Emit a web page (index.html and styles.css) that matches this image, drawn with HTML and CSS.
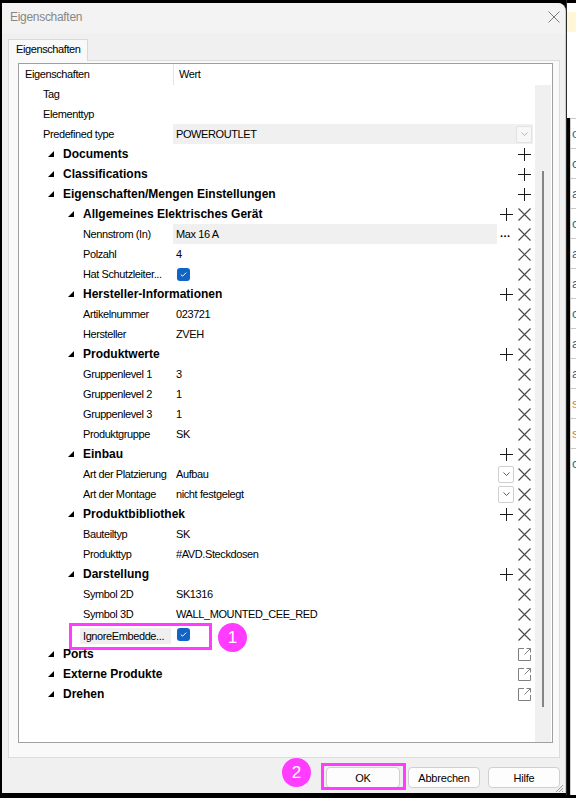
FILE: index.html
```html
<!DOCTYPE html>
<html lang="de">
<head>
<meta charset="utf-8">
<title>Eigenschaften</title>
<link rel="stylesheet" href="styles.css">
</head>
<body>
<div class="screen">
  <div class="dialog">
    <div class="titlebar">
      <span class="title">Eigenschaften</span>
      <svg class="close" width="12" height="12" viewBox="0 0 12 12"><path d="M0.5 0.5l11 11M11.5 0.5l-11 11" stroke="#7a7a7a" stroke-width="1" fill="none"/></svg>
    </div>
    <div class="content">
      <div class="tabs"><div class="tab">Eigenschaften</div></div>
      <div class="panel">
        <div class="listbox">
          <div class="head"><div class="hk">Eigenschaften</div><div class="hv">Wert</div></div>
          <div class="treebody">
            <div class="rows">
              <div class="row"><div class="k p0">Tag</div><div class="v"></div><div class="ic"></div><div class="ic"></div></div>
              <div class="row"><div class="k p0">Elementtyp</div><div class="v"></div><div class="ic"></div><div class="ic"></div></div>
              <div class="row"><div class="k p0">Predefined type</div><div class="v shade wide"><span>POWEROUTLET</span><span class="dd off"><svg width="7" height="4" viewBox="0 0 7 4"><path d="M0.5 0.5l3 3 3-3" stroke="#b4b4b4" fill="none"/></svg></span></div></div>

              <div class="row"><div class="k g0"><i class="tri"></i>Documents</div><div class="v"></div><div class="ic"></div><div class="ic"><svg class="plus" width="13" height="13" viewBox="0 0 13 13"><path d="M6.5 0v13M0 6.5h13"/></svg></div></div>
              <div class="row"><div class="k g0"><i class="tri"></i>Classifications</div><div class="v"></div><div class="ic"></div><div class="ic"><svg class="plus" width="13" height="13" viewBox="0 0 13 13"><path d="M6.5 0v13M0 6.5h13"/></svg></div></div>
              <div class="row"><div class="k g0"><i class="tri"></i>Eigenschaften/Mengen Einstellungen</div><div class="v"></div><div class="ic"></div><div class="ic"><svg class="plus" width="13" height="13" viewBox="0 0 13 13"><path d="M6.5 0v13M0 6.5h13"/></svg></div></div>

              <div class="row"><div class="k g1"><i class="tri"></i>Allgemeines Elektrisches Gerät</div><div class="v"></div><div class="ic"><svg class="plus" width="13" height="13" viewBox="0 0 13 13"><path d="M6.5 0v13M0 6.5h13"/></svg></div><div class="ic"><svg class="del" width="13" height="13" viewBox="0 0 13 13"><path d="M0.5 0.5l12 12M12.5 0.5l-12 12"/></svg></div></div>
              <div class="row"><div class="k p1">Nennstrom (In)</div><div class="v shade">Max 16 A</div><div class="ic dots">...</div><div class="ic"><svg class="del" width="13" height="13" viewBox="0 0 13 13"><path d="M0.5 0.5l12 12M12.5 0.5l-12 12"/></svg></div></div>
              <div class="row"><div class="k p1">Polzahl</div><div class="v">4</div><div class="ic"></div><div class="ic"><svg class="del" width="13" height="13" viewBox="0 0 13 13"><path d="M0.5 0.5l12 12M12.5 0.5l-12 12"/></svg></div></div>
              <div class="row"><div class="k p1">Hat Schutzleiter...</div><div class="v"><span class="check"><svg width="7" height="5" viewBox="0 0 7 5"><path d="M0.8 2.6l1.8 1.6 3.6-3.6" stroke="#fff" stroke-width="1" fill="none"/></svg></span></div><div class="ic"></div><div class="ic"><svg class="del" width="13" height="13" viewBox="0 0 13 13"><path d="M0.5 0.5l12 12M12.5 0.5l-12 12"/></svg></div></div>

              <div class="row"><div class="k g1"><i class="tri"></i>Hersteller-Informationen</div><div class="v"></div><div class="ic"><svg class="plus" width="13" height="13" viewBox="0 0 13 13"><path d="M6.5 0v13M0 6.5h13"/></svg></div><div class="ic"><svg class="del" width="13" height="13" viewBox="0 0 13 13"><path d="M0.5 0.5l12 12M12.5 0.5l-12 12"/></svg></div></div>
              <div class="row"><div class="k p1">Artikelnummer</div><div class="v">023721</div><div class="ic"></div><div class="ic"><svg class="del" width="13" height="13" viewBox="0 0 13 13"><path d="M0.5 0.5l12 12M12.5 0.5l-12 12"/></svg></div></div>
              <div class="row"><div class="k p1">Hersteller</div><div class="v">ZVEH</div><div class="ic"></div><div class="ic"><svg class="del" width="13" height="13" viewBox="0 0 13 13"><path d="M0.5 0.5l12 12M12.5 0.5l-12 12"/></svg></div></div>

              <div class="row"><div class="k g1"><i class="tri"></i>Produktwerte</div><div class="v"></div><div class="ic"><svg class="plus" width="13" height="13" viewBox="0 0 13 13"><path d="M6.5 0v13M0 6.5h13"/></svg></div><div class="ic"><svg class="del" width="13" height="13" viewBox="0 0 13 13"><path d="M0.5 0.5l12 12M12.5 0.5l-12 12"/></svg></div></div>
              <div class="row"><div class="k p1">Gruppenlevel 1</div><div class="v">3</div><div class="ic"></div><div class="ic"><svg class="del" width="13" height="13" viewBox="0 0 13 13"><path d="M0.5 0.5l12 12M12.5 0.5l-12 12"/></svg></div></div>
              <div class="row"><div class="k p1">Gruppenlevel 2</div><div class="v">1</div><div class="ic"></div><div class="ic"><svg class="del" width="13" height="13" viewBox="0 0 13 13"><path d="M0.5 0.5l12 12M12.5 0.5l-12 12"/></svg></div></div>
              <div class="row"><div class="k p1">Gruppenlevel 3</div><div class="v">1</div><div class="ic"></div><div class="ic"><svg class="del" width="13" height="13" viewBox="0 0 13 13"><path d="M0.5 0.5l12 12M12.5 0.5l-12 12"/></svg></div></div>
              <div class="row"><div class="k p1">Produktgruppe</div><div class="v">SK</div><div class="ic"></div><div class="ic"><svg class="del" width="13" height="13" viewBox="0 0 13 13"><path d="M0.5 0.5l12 12M12.5 0.5l-12 12"/></svg></div></div>

              <div class="row"><div class="k g1"><i class="tri"></i>Einbau</div><div class="v"></div><div class="ic"><svg class="plus" width="13" height="13" viewBox="0 0 13 13"><path d="M6.5 0v13M0 6.5h13"/></svg></div><div class="ic"><svg class="del" width="13" height="13" viewBox="0 0 13 13"><path d="M0.5 0.5l12 12M12.5 0.5l-12 12"/></svg></div></div>
              <div class="row"><div class="k p1">Art der Platzierung</div><div class="v">Aufbau</div><div class="ic"><span class="dd"><svg width="7" height="4" viewBox="0 0 7 4"><path d="M0.5 0.5l3 3 3-3" stroke="#606060" fill="none"/></svg></span></div><div class="ic"><svg class="del" width="13" height="13" viewBox="0 0 13 13"><path d="M0.5 0.5l12 12M12.5 0.5l-12 12"/></svg></div></div>
              <div class="row"><div class="k p1">Art der Montage</div><div class="v">nicht festgelegt</div><div class="ic"><span class="dd"><svg width="7" height="4" viewBox="0 0 7 4"><path d="M0.5 0.5l3 3 3-3" stroke="#606060" fill="none"/></svg></span></div><div class="ic"><svg class="del" width="13" height="13" viewBox="0 0 13 13"><path d="M0.5 0.5l12 12M12.5 0.5l-12 12"/></svg></div></div>

              <div class="row"><div class="k g1"><i class="tri"></i>Produktbibliothek</div><div class="v"></div><div class="ic"><svg class="plus" width="13" height="13" viewBox="0 0 13 13"><path d="M6.5 0v13M0 6.5h13"/></svg></div><div class="ic"><svg class="del" width="13" height="13" viewBox="0 0 13 13"><path d="M0.5 0.5l12 12M12.5 0.5l-12 12"/></svg></div></div>
              <div class="row"><div class="k p1">Bauteiltyp</div><div class="v">SK</div><div class="ic"></div><div class="ic"><svg class="del" width="13" height="13" viewBox="0 0 13 13"><path d="M0.5 0.5l12 12M12.5 0.5l-12 12"/></svg></div></div>
              <div class="row"><div class="k p1">Produkttyp</div><div class="v">#AVD.Steckdosen</div><div class="ic"></div><div class="ic"><svg class="del" width="13" height="13" viewBox="0 0 13 13"><path d="M0.5 0.5l12 12M12.5 0.5l-12 12"/></svg></div></div>

              <div class="row"><div class="k g1"><i class="tri"></i>Darstellung</div><div class="v"></div><div class="ic"><svg class="plus" width="13" height="13" viewBox="0 0 13 13"><path d="M6.5 0v13M0 6.5h13"/></svg></div><div class="ic"><svg class="del" width="13" height="13" viewBox="0 0 13 13"><path d="M0.5 0.5l12 12M12.5 0.5l-12 12"/></svg></div></div>
              <div class="row"><div class="k p1">Symbol 2D</div><div class="v">SK1316</div><div class="ic"></div><div class="ic"><svg class="del" width="13" height="13" viewBox="0 0 13 13"><path d="M0.5 0.5l12 12M12.5 0.5l-12 12"/></svg></div></div>
              <div class="row"><div class="k p1">Symbol 3D</div><div class="v">WALL_MOUNTED_CEE_RED</div><div class="ic"></div><div class="ic"><svg class="del" width="13" height="13" viewBox="0 0 13 13"><path d="M0.5 0.5l12 12M12.5 0.5l-12 12"/></svg></div></div>
              <div class="row marked"><div class="k p1"><span class="sel">IgnoreEmbedde...</span></div><div class="v"><span class="check"><svg width="7" height="5" viewBox="0 0 7 5"><path d="M0.8 2.6l1.8 1.6 3.6-3.6" stroke="#fff" stroke-width="1" fill="none"/></svg></span></div><div class="ic"></div><div class="ic"><svg class="del" width="13" height="13" viewBox="0 0 13 13"><path d="M0.5 0.5l12 12M12.5 0.5l-12 12"/></svg></div>
                <span class="mark-box one"></span><span class="badge one">1</span>
              </div>

              <div class="row"><div class="k g0"><i class="tri"></i>Ports</div><div class="v"></div><div class="ic"></div><div class="ic"><svg class="ext" width="15" height="15" viewBox="0 0 15 15"><path d="M7 1.5H1.5v12h12V8"/><path d="M7.5 7.5l6-6M9.5 1.5h4v4"/></svg></div></div>
              <div class="row"><div class="k g0"><i class="tri"></i>Externe Produkte</div><div class="v"></div><div class="ic"></div><div class="ic"><svg class="ext" width="15" height="15" viewBox="0 0 15 15"><path d="M7 1.5H1.5v12h12V8"/><path d="M7.5 7.5l6-6M9.5 1.5h4v4"/></svg></div></div>
              <div class="row"><div class="k g0"><i class="tri"></i>Drehen</div><div class="v"></div><div class="ic"></div><div class="ic"><svg class="ext" width="15" height="15" viewBox="0 0 15 15"><path d="M7 1.5H1.5v12h12V8"/><path d="M7.5 7.5l6-6M9.5 1.5h4v4"/></svg></div></div>
            </div>
            <div class="vscroll"><div class="thumb"></div></div>
          </div>
        </div>
      </div>
      <div class="footer">
        <div class="ok-wrap">
          <button class="btn">OK</button>
          <span class="mark-box two"></span><span class="badge two">2</span>
        </div>
        <button class="btn">Abbrechen</button>
        <button class="btn">Hilfe</button>
        <svg class="grip" width="10" height="10" viewBox="0 0 10 10"><path d="M9 2L2 9M9 5L5 9M9 8L8 9" stroke="#9a9a9a" stroke-width="1" fill="none"/></svg>
      </div>
    </div>
  </div>
  <div class="behind">
    <div class="bh-note"></div>
    <div class="bh-list">
      <div class="bh-row">o</div>
      <div class="bh-row">c</div>
      <div class="bh-row">a</div>
      <div class="bh-row">c</div>
      <div class="bh-row">a</div>
      <div class="bh-row">a</div>
      <div class="bh-row">c</div>
      <div class="bh-row">a</div>
      <div class="bh-row">a</div>
      <div class="bh-row warm">s</div>
      <div class="bh-row warm">s</div>
      <div class="bh-row">c</div>
    </div>
  </div>
</div>
</body>
</html>
```

FILE: styles.css
```css
* { box-sizing: border-box; }

html, body {
  margin: 0;
  padding: 0;
}

body {
  background: #000;
  font-family: "Liberation Sans", Arial, sans-serif;
  font-size: 11px;
  letter-spacing: -0.4px;
  color: #000;
}

.screen {
  display: flex;
  width: 576px;
  height: 798px;
  padding: 3px 0 0 2px;
  overflow: hidden;
}

/* dialog window */
.dialog {
  width: 564px;
  height: 790px;
  background: #f0f0f0;
  border-right: 1px solid #cfcfcf;
  border-top-right-radius: 8px;
  display: flex;
  flex-direction: column;
}

.titlebar {
  height: 30px;
  flex: none;
  display: flex;
  align-items: center;
  justify-content: space-between;
  padding: 0 5px 0 8px;
  background: #f3f3f3;
  border-top-right-radius: 8px;
}

.title {
  color: #878787;
  font-size: 12px;
  letter-spacing: -0.3px;
  margin-top: -2px;
}

.close { display: block; margin-top: -2px; }

.content {
  flex: 1;
  display: flex;
  flex-direction: column;
  padding: 6px 5px 0 6px;
}

/* tab strip */
.tabs {
  display: flex;
  height: 21px;
  flex: none;
}

.tab {
  position: relative;
  z-index: 1;
  height: 22px;
  padding: 0 6px 0 7px;
  line-height: 19px;
  background: #f9f9f9;
  border: 1px solid #d9d9d9;
  border-bottom: none;
}

.panel {
  height: 698px;
  flex: none;
  background: #f9f9f9;
  border: 1px solid #dcdcdc;
  padding: 2px 6px 14px 9px;
}

/* property tree */
.listbox {
  height: 680px;
  background: #fff;
  border: 1px solid #a0a0a0;
  display: flex;
  flex-direction: column;
}

.head {
  height: 21px;
  flex: none;
  display: flex;
  line-height: 21px;
}

.hk {
  width: 155px;
  padding-left: 6px;
  border-right: 1px solid #e3e3e3;
}

.hv { padding-left: 5px; }

.treebody {
  flex: 1;
  display: flex;
  min-height: 0;
  margin-top: -1px;
}

.rows { width: 516px; }

.row {
  position: relative;
  display: grid;
  grid-template-columns: 154px 324px 18px 18px;
  height: 20px;
  line-height: 20px;
}

.k {
  white-space: nowrap;
}

.p0 { padding-left: 24px; }
.p1 { padding-left: 64px; }

.g0, .g1 {
  font-weight: bold;
  font-size: 12px;
  letter-spacing: 0;
}

.g0 { padding-left: 29px; }
.g1 { padding-left: 49px; }

.tri {
  display: inline-block;
  width: 0;
  height: 0;
  border-top: 6px solid transparent;
  border-right: 6px solid #000;
  margin-right: 9px;
  vertical-align: 1px;
}

.v {
  padding-left: 3px;
  white-space: nowrap;
}

.shade { background: #f0f0f0; }

.wide {
  grid-column: 2 / 5;
  display: flex;
  align-items: center;
  justify-content: space-between;
  padding-right: 1px;
}

.ic {
  height: 20px;
  display: flex;
  align-items: center;
  justify-content: center;
}

.plus path { stroke: #1a1a1a; stroke-width: 1; fill: none; }
.del path { stroke: #4a4a4a; stroke-width: 1.15; fill: none; }
.ext path { stroke: #808080; stroke-width: 1; fill: none; }

.dots {
  font-weight: bold;
  letter-spacing: 0.5px;
  align-items: flex-end;
  line-height: 14px;
  padding-bottom: 4px;
  justify-content: flex-start;
  padding-left: 3px;
}

.dd {
  width: 16px;
  height: 17px;
  display: flex;
  align-items: center;
  justify-content: center;
  background: #fff;
  border: 1px solid #cfcfcf;
  border-radius: 2px;
}

.dd.off {
  background: #f7f7f7;
  border-color: #e2e2e2;
}

.check {
  display: inline-flex;
  align-items: center;
  justify-content: center;
  width: 13px;
  height: 13px;
  margin-left: 1px;
  margin-top: 4px;
  vertical-align: top;
  background: #0f64c6;
  border-radius: 3px;
}

.sel {
  display: inline-block;
  height: 16px;
  line-height: 16px;
  margin-top: 4px;
  margin-left: -3px;
  padding: 0 7px 0 3px;
  background: #efefef;
  vertical-align: top;
}

/* scrollbar */
.vscroll {
  width: 16px;
  flex: none;
  background: #f0f0f0;
  margin-top: 1px;
  padding: 86px 0 0 7px;
}

.thumb {
  width: 2px;
  height: 536px;
  background: #858585;
}

/* dialog buttons */
.footer {
  position: relative;
  flex: 1;
  display: flex;
  justify-content: flex-end;
  align-items: flex-start;
  gap: 8px;
  padding-top: 9px;
}

.btn {
  width: 72px;
  height: 21px;
  padding: 0;
  font-family: inherit;
  font-size: 11px;
  letter-spacing: -0.2px;
  color: #000;
  background: #fdfdfd;
  border: 1px solid #d0d0d0;
  border-radius: 4px;
}

.ok-wrap {
  position: relative;
  display: flex;
}

.ok-wrap .btn { width: 74px; }

.grip {
  position: absolute;
  right: -4px;
  bottom: 0;
}

/* annotation marks */
.mark-box {
  position: absolute;
  border: 3px solid #ff3cff;
  pointer-events: none;
}

.mark-box.one {
  left: 50px;
  top: -1px;
  width: 143px;
  height: 27px;
}

.mark-box.two {
  left: -5px;
  top: -4px;
  width: 85px;
  height: 27px;
}

.badge {
  position: absolute;
  width: 29px;
  height: 29px;
  border-radius: 50%;
  background: #ff3cff;
  color: #fff;
  font-size: 17px;
  letter-spacing: 0;
  line-height: 29px;
  text-align: center;
}

.badge.one { left: 199px; top: -1px; }
.badge.two { left: -44px; top: -9px; }

/* strip of the application window behind the dialog */
.behind {
  width: 10px;
  height: 795px;
  margin-top: -3px;
  padding-top: 3px;
  background: #000;
  border-left: 1px solid #2a2a2a;
  display: flex;
  flex-direction: column;
  overflow: hidden;
}

.bh-note {
  height: 115px;
  flex: none;
  background: linear-gradient(#fff 0 9px, #fff7d6 9px 29px, #fff 29px);
}

.bh-list {
  flex: 1;
  background: #fff;
  border-left: 1px solid #d0d0d0;
  margin-left: 3px;
}

.bh-row {
  height: 30px;
  line-height: 30px;
  border-top: 1px solid #c8c8c8;
  color: #4a5f7d;
  font-size: 13px;
  letter-spacing: 0;
  padding-left: 1px;
  overflow: hidden;
}

.bh-row.warm { color: #c9874a; }
```
